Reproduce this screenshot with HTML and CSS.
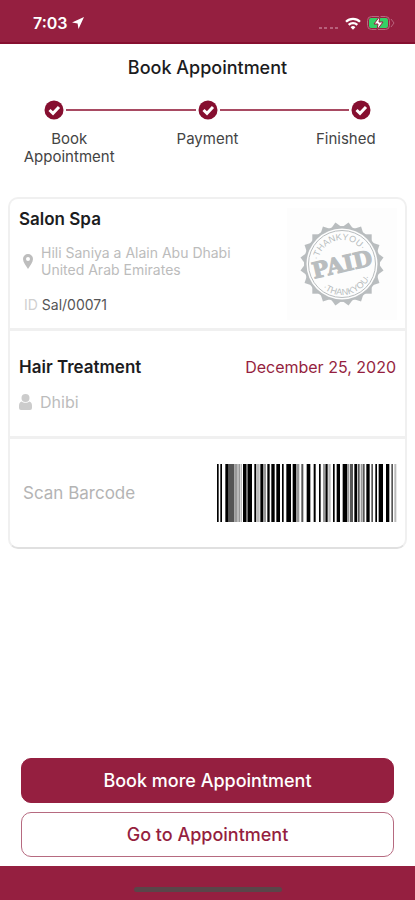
FILE: index.html
```html
<!DOCTYPE html>
<html lang="en">
<head>
    <meta charset="UTF-8">
    <meta name="viewport" content="width=device-width, initial-scale=1.0">
    <title>Book Appointment</title>
    <link rel="stylesheet" href="styles.css">
</head>
<body>
    <div class="status-bar">
        <div class="status-time">
            <span>7:03</span>
            <svg width="12" height="12" viewBox="0 0 12 12"><path d="M12 0L0 5.5 5.6 6.4 6.5 12z" fill="#fff"/></svg>
        </div>
        <div class="status-icons">
            <svg width="20" height="4" viewBox="0 0 20 4" fill="#b7607b">
                <rect x="0" y="1" width="3" height="2"/>
                <rect x="5" y="1" width="3" height="2"/>
                <rect x="11" y="1" width="3" height="2"/>
                <rect x="16" y="1" width="3" height="2"/>
            </svg>
            <svg width="16" height="13" viewBox="0 0 16 13" fill="none" stroke="#fff" stroke-width="2.3">
                <path d="M1 4.8a10 10 0 0 1 14 0"/>
                <path d="M3.7 7.8a6.2 6.2 0 0 1 8.6 0"/>
                <path d="M8 12.8L5.6 10.3a3.4 3.4 0 0 1 4.8 0z" fill="#fff" stroke="none"/>
            </svg>
            <svg width="28" height="14" viewBox="0 0 28 14">
                <rect x="0.5" y="0.5" width="22" height="13" rx="4" fill="none" stroke="#b9657f"/>
                <path d="M24 3l3 4-3 4" fill="none" stroke="#b9657f"/>
                <rect x="2" y="2" width="19" height="10" rx="2" fill="#35d065"/>
                <path d="M13 0L7 8h4l-1 6 6-8h-4z" fill="#fff" stroke="#951f40" stroke-width="1"/>
            </svg>
        </div>
    </div>

    <main>
        <h1>Book Appointment</h1>

        <div class="steps-track">
            <svg class="step-dot" viewBox="0 0 20 20"><circle cx="10" cy="10" r="9.5"/><path d="M5.5 10l3.5 3.4 6-6.4"/></svg>
            <span class="step-line"></span>
            <svg class="step-dot" viewBox="0 0 20 20"><circle cx="10" cy="10" r="9.5"/><path d="M5.5 10l3.5 3.4 6-6.4"/></svg>
            <span class="step-line"></span>
            <svg class="step-dot" viewBox="0 0 20 20"><circle cx="10" cy="10" r="9.5"/><path d="M5.5 10l3.5 3.4 6-6.4"/></svg>
        </div>
        <ol class="steps-labels">
            <li>Book<br>Appointment</li>
            <li>Payment</li>
            <li>Finished</li>
        </ol>

        <section class="card">
            <div class="card-row salon">
                <div class="salon-info">
                    <h2>Salon Spa</h2>
                    <div class="address">
                        <svg width="10" height="15" viewBox="0 0 10 15"><path d="M5 0a5 5 0 0 1 5 5c0 3.4-3 6.4-5 10C3 11.4 0 8.4 0 5a5 5 0 0 1 5-5zm0 3a2 2 0 1 0 0 4 2 2 0 0 0 0-4z" fill="#bdbdbd" fill-rule="evenodd"/></svg>
                        <p>Hili Saniya a Alain Abu Dhabi<br>United Arab Emirates</p>
                    </div>
                    <p class="booking-id"><span>ID</span> Sal/00071</p>
                </div>
                <div class="stamp">
                    <svg width="84" height="84" viewBox="0 0 84 84">
                        <defs>
                            <path id="arcTop" d="M18 42a24 24 0 0 1 48 0"/>
                            <path id="arcBottom" d="M11 42a31 31 0 0 0 62 0"/>
                            <rect id="teeth" x="12.3" y="12.3" width="59.4" height="59.4"/>
                        </defs>
                        <g fill="#b9bdbf">
                            <use href="#teeth"/>
                            <use href="#teeth" transform="rotate(18 42 42)"/>
                            <use href="#teeth" transform="rotate(36 42 42)"/>
                            <use href="#teeth" transform="rotate(54 42 42)"/>
                            <use href="#teeth" transform="rotate(72 42 42)"/>
                            <circle cx="42" cy="42" r="38"/>
                        </g>
                        <circle cx="42" cy="42" r="35.5" fill="#fdfdfd"/>
                        <circle cx="42" cy="42" r="33.5" fill="none" stroke="#b9bdbf"/>
                        <g transform="rotate(-13 42 42)" fill="#b9bdbf" text-anchor="middle">
                            <text class="stamp-small"><textPath href="#arcTop" startOffset="50%">·THANKYOU·</textPath></text>
                            <text class="stamp-small"><textPath href="#arcBottom" startOffset="50%">·THANKYOU·</textPath></text>
                            <text class="stamp-big" x="42" y="50">PAID</text>
                        </g>
                    </svg>
                </div>
            </div>

            <div class="card-row treatment">
                <div class="treatment-head">
                    <h2>Hair Treatment</h2>
                    <span class="date">December 25, 2020</span>
                </div>
                <div class="person">
                    <svg width="13" height="16" viewBox="0 0 13 16" fill="#cccccc"><circle cx="6.5" cy="4" r="4"/><path d="M2.5 7.5c2 1.8 6 1.8 8 0C12.5 8 13 10 13 12v2q0 2-2 2H2q-2 0-2-2v-2c0-2 .5-4 2.5-4.5z"/></svg>
                    <span>Dhibi</span>
                </div>
            </div>

            <div class="card-row scan">
                <span>Scan Barcode</span>
                <svg class="barcode" viewBox="0 0 540 174" preserveAspectRatio="none">
                    <path fill="#000" d="M0 0h5v174h-5zM10 0h5v174h-5zM25 0h10v174h-10zM78 0h10v174h-10zM92 0h13v174h-13zM112 0h5v174h-5zM130 0h8v174h-8zM151 0h7v174h-7zM163 0h10v174h-10zM178 0h11v174h-11zM195 0h5v174h-5zM208 0h14v174h-14zM227 0h11v174h-11zM269 0h11v174h-11zM290 0h6v174h-6zM306 0h5v174h-5zM325 0h7v174h-7zM348 0h5v174h-5zM359 0h10v174h-10zM377 0h14v174h-14zM412 0h8v174h-8zM448 0h10v174h-10zM475 0h5v174h-5zM485 0h13v174h-13zM507 0h10v174h-10z"/>
                    <path fill="#555" d="M35 0h17v174h-17zM88 0h4v174h-4zM253 0h6v174h-6zM399 0h9v174h-9zM422 0h6v174h-6zM437 0h6v174h-6zM463 0h5v174h-5zM523 0h5v174h-5z"/>
                    <path fill="#999" d="M52 0h10v174h-10zM64 0h6v174h-6zM138 0h9v174h-9zM238 0h9v174h-9zM318 0h7v174h-7zM391 0h6v174h-6zM431 0h5v174h-5z"/>
                    <path fill="#bbb" d="M72 0h3v174h-3zM117 0h11v174h-11zM334 0h7v174h-7zM532 0h6v174h-6z"/>
                </svg>
            </div>
        </section>

        <div class="actions">
            <button class="btn btn-primary" type="button">Book more Appointment</button>
            <button class="btn btn-outline" type="button">Go to Appointment</button>
        </div>
    </main>

    <footer class="home-bar"><span></span></footer>
</body>
</html>
```
FILE: styles.css
```css
:root {
    --primary: #951f40;
    --primary-dark: #860f30;
    --text: #1c1c1e;
    --muted: #bcbcbc;
    --border: #f0f0f0;
}

* {
    margin: 0;
    padding: 0;
    box-sizing: border-box;
}

body {
    display: flex;
    flex-direction: column;
    min-height: 100vh;
    background: #fff;
    color: var(--text);
    font-family: Inter, "Liberation Sans", sans-serif;
}

svg {
    display: block;
    flex-shrink: 0;
}

.status-bar {
    display: flex;
    justify-content: space-between;
    align-items: center;
    height: 44px;
    padding: 4px 20px 0 33px;
    background: var(--primary);
    border-bottom: 2px solid var(--primary-dark);
    color: #fff;
    font-size: 16px;
    font-weight: 600;
}

.status-time,
.status-icons {
    display: flex;
    align-items: center;
    gap: 4px;
}

.status-icons {
    gap: 6px;
}

.status-icons svg:first-child {
    align-self: flex-end;
}

main {
    flex: 1;
    display: flex;
    flex-direction: column;
}

h1 {
    margin-top: 13px;
    font-size: 18px;
    font-weight: 500;
    line-height: 22px;
    text-align: center;
}

.steps-track {
    display: flex;
    align-items: center;
    gap: 2px;
    margin-top: 21px;
    padding: 0 44px;
}

.step-dot {
    width: 20px;
    height: 20px;
    fill: var(--primary-dark);
}

.step-dot path {
    fill: none;
    stroke: #fff;
    stroke-width: 3;
}

.step-line {
    flex: 1;
    height: 2px;
    background: #a84a62;
}

.steps-labels {
    display: grid;
    grid-template-columns: repeat(3, 1fr);
    margin-top: 10px;
    list-style: none;
    color: #444;
    font-size: 15px;
    line-height: 18px;
    text-align: center;
}

.card {
    margin: 31px 8px 0;
    border: 2px solid var(--border);
    border-bottom-color: #e0e0e0;
    border-radius: 10px;
}

.card-row + .card-row {
    border-top: 3px solid var(--border);
}

h2 {
    font-size: 17px;
    font-weight: 600;
    line-height: 22px;
}

.salon {
    display: flex;
    justify-content: space-between;
    padding: 9px 8px 8px 9px;
}

.address {
    display: flex;
    align-items: center;
    gap: 8px;
    margin-top: 14px;
    padding-left: 4px;
    color: var(--muted);
    font-size: 14px;
    line-height: 17px;
}

.booking-id {
    margin-top: 18px;
    padding-left: 5px;
    color: #555;
    font-size: 14px;
    line-height: 18px;
}

.booking-id span {
    color: #d0d0d0;
}

.stamp {
    display: flex;
    align-items: center;
    justify-content: center;
    width: 110px;
    height: 112px;
    background: #fdfdfd;
}

.stamp-small {
    font-family: "Liberation Sans", sans-serif;
    font-size: 9px;
}

.stamp-big {
    font-family: "DejaVu Serif", serif;
    font-size: 22px;
    font-weight: 700;
    stroke: #b9bdbf;
    stroke-width: 1px;
}

.treatment {
    padding: 25px 9px 24px;
}

.treatment-head {
    display: flex;
    justify-content: space-between;
    align-items: center;
}

.date {
    color: var(--primary);
    font-size: 16px;
}

.person {
    display: flex;
    align-items: center;
    gap: 8px;
    margin-top: 14px;
    color: var(--muted);
    font-size: 16px;
    line-height: 20px;
}

.scan {
    display: flex;
    justify-content: space-between;
    align-items: center;
    padding: 25px 8px 25px 13px;
    color: #b4b4b4;
    font-size: 17px;
}

.barcode {
    width: 180px;
    height: 58px;
}

.actions {
    display: flex;
    flex-direction: column;
    gap: 9px;
    margin-top: auto;
    padding: 20px 21px 9px;
}

.btn {
    height: 45px;
    border: 1px solid var(--primary);
    border-radius: 10px;
    font-family: inherit;
    font-size: 18px;
    font-weight: 500;
    cursor: pointer;
}

.btn-primary {
    background: var(--primary);
    color: #fff;
}

.btn-outline {
    background: #fff;
    border-color: #b66a80;
    color: var(--primary);
}

.home-bar {
    display: flex;
    justify-content: center;
    height: 34px;
    padding-top: 21px;
    background: var(--primary);
}

.home-bar span {
    width: 148px;
    height: 5px;
    border-radius: 3px;
    background: #5a4549;
}
```
